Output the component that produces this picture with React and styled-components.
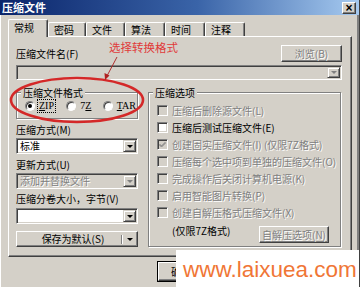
import styled, { createGlobalStyle } from 'styled-components';

const GlobalStyle = createGlobalStyle`
  html, body {
    margin: 0;
    padding: 0;
    background: #d4d0c8;
  }
  body {
    width: 360px;
    height: 287px;
    overflow: hidden;
    font-family: "Noto Sans CJK SC", "Liberation Sans", sans-serif;
    font-size: 10px;
    color: #000;
  }
`;

const tabs = [
  { label: '常规', width: 40 },
  { label: '密码', width: 38 },
  { label: '文件', width: 39 },
  { label: '算法', width: 40 },
  { label: '时间', width: 40 },
  { label: '注释', width: 40 },
];

const options = [
  { label: '压缩后删除源文件(L)', disabled: true },
  { label: '压缩后测试压缩文件(E)', disabled: false },
  { label: '创建固实压缩文件(I) (仅限7Z格式)', disabled: true, checked: true },
  { label: '压缩每个选中项到单独的压缩文件(O)', disabled: true },
  { label: '完成操作后关闭计算机电源(K)', disabled: true },
  { label: '启用智能图片转换(P)', disabled: true },
  { label: '创建自解压格式压缩文件(X)', disabled: true },
];

const App = () => {
  return (
    <>
      <GlobalStyle />
      <Window>
        <TitleBar>
          <Title>压缩文件</Title>
          <CloseButton>×</CloseButton>
        </TitleBar>

        <Body>
          <TabStrip>
            {tabs.map((tab, i) => (
              <Tab key={tab.label} $width={tab.width} $active={i === 0}>
                {tab.label}
              </Tab>
            ))}
          </TabStrip>

          <Panel>
            <TopRow>
              <FieldLabel>压缩文件名(F)</FieldLabel>
              <Button $width={61} disabled>浏览(B)</Button>
            </TopRow>
            <Combo $disabled>
              <ComboText />
              <ArrowBox $disabled />
            </Combo>

            <Columns>
              <LeftColumn>
                <GroupBox>
                  <GroupTitle>压缩文件格式</GroupTitle>
                  <RadioRow>
                    <RadioItem $width={42}>
                      <RadioCircle $checked />
                      <RadioText $focused><u>Z</u>IP</RadioText>
                    </RadioItem>
                    <RadioItem $width={37}>
                      <RadioCircle />
                      <RadioText>7<u>Z</u></RadioText>
                    </RadioItem>
                    <RadioItem>
                      <RadioCircle />
                      <RadioText><u>T</u>AR</RadioText>
                    </RadioItem>
                  </RadioRow>
                </GroupBox>

                <FieldLabel $top={4}>压缩方式(M)</FieldLabel>
                <Select $top={1}>
                  <ComboText>标准</ComboText>
                  <ArrowBox />
                </Select>

                <FieldLabel $top={4}>更新方式(U)</FieldLabel>
                <Select $top={1} $disabled>
                  <ComboText $disabled>添加并替换文件</ComboText>
                  <ArrowBox $disabled />
                </Select>

                <FieldLabel $top={3}>压缩分卷大小，字节(V)</FieldLabel>
                <Select $top={2}>
                  <ComboText />
                  <ArrowBox />
                </Select>

                <SplitButton>
                  <SplitMain>保存为默认(S)</SplitMain>
                  <SplitDivider />
                  <SplitArrow>
                    <Triangle />
                  </SplitArrow>
                </SplitButton>
              </LeftColumn>

              <RightColumn>
                <GroupTitle>压缩选项</GroupTitle>
                <OptionList>
                  {options.map((opt) => (
                    <CheckRow key={opt.label}>
                      <CheckBox $disabled={opt.disabled}>
                        {opt.checked && (
                          <svg width="9" height="9" viewBox="0 0 9 9">
                            <path
                              d="M1.5 4 L3.5 6 L7.5 2 M1.5 5 L3.5 7 L7.5 3"
                              fill="none"
                              stroke="#808080"
                              strokeWidth="1"
                            />
                          </svg>
                        )}
                      </CheckBox>
                      <CheckText $disabled={opt.disabled}>{opt.label}</CheckText>
                    </CheckRow>
                  ))}
                  <LastLine>
                    <NoteText>(仅限7Z格式)</NoteText>
                    <Button $width={70} $height={17} disabled>自解压选项(N)</Button>
                  </LastLine>
                </OptionList>
              </RightColumn>
            </Columns>
          </Panel>

          <BottomBar>
            <Button $width={46} $height={19} $default>确定</Button>
          </BottomBar>
        </Body>

        <Annotation>选择转换格式</Annotation>
        <Marks width="360" height="287" viewBox="0 0 360 287">
          <ellipse cx="77" cy="100" rx="66" ry="22" fill="none" stroke="#d42828" strokeWidth="2.6" />
          <line x1="117" y1="57" x2="107.5" y2="75" stroke="#b03030" strokeWidth="1" />
          <polygon points="105,80 104.5,73 109.5,75.5" fill="#b02020" />
        </Marks>

        <Watermark>www.laixuea.com</Watermark>
      </Window>
    </>
  );
};

const raised = `
  border: 1px solid;
  border-color: #fff #404040 #404040 #fff;
  box-shadow: inset -1px -1px 0 #808080;
`;

const sunken = `
  border: 1px solid;
  border-color: #808080 #fff #fff #808080;
  box-shadow: inset 1px 1px 0 #404040, inset -1px -1px 0 #d4d0c8;
`;

const Window = styled.div`
  position: relative;
  width: 360px;
  height: 287px;
  box-sizing: border-box;
  background: #d4d0c8;
  border-right: 1px solid #404040;
  box-shadow: inset -2px 0 0 #808080, inset 1px 0 0 #fff;
  display: flex;
  flex-direction: column;
  overflow: hidden;
`;

const TitleBar = styled.div`
  height: 15px;
  display: flex;
  align-items: center;
  justify-content: space-between;
  padding: 0 3px 0 2px;
  background: linear-gradient(to right, #0a246a 0%, #3a64a8 55%, #a6caf0 100%);
`;

const Title = styled.span`
  color: #fff;
  font-weight: bold;
  font-size: 11px;
  line-height: 15px;
`;

const CloseButton = styled.span`
  width: 12px;
  height: 10px;
  background: #d4d0c8;
  ${raised}
  font-family: "Liberation Sans", sans-serif;
  font-size: 12px;
  font-weight: bold;
  line-height: 10px;
  text-align: center;
`;

const Body = styled.div`
  padding: 4px 0 0 8px;
`;

const TabStrip = styled.div`
  display: flex;
  align-items: flex-end;
  height: 17px;
`;

const Tab = styled.div`
  position: relative;
  z-index: ${(p) => (p.$active ? 2 : 1)};
  width: ${(p) => p.$width}px;
  height: ${(p) => (p.$active ? 18 : 14)}px;
  margin-bottom: ${(p) => (p.$active ? -1 : 0)}px;
  box-sizing: border-box;
  padding-left: 5px;
  background: #d4d0c8;
  border-top: 1px solid #fff;
  border-left: 1px solid #fff;
  border-right: 1px solid #404040;
  border-radius: 2px 2px 0 0;
  box-shadow: inset -1px 0 0 #808080;
  font-size: 10px;
  line-height: ${(p) => (p.$active ? 15 : 13)}px;
`;

const Panel = styled.div`
  width: 344px;
  height: 221px;
  box-sizing: border-box;
  padding: 8px 9px 0 7px;
  border: 1px solid;
  border-color: #fff #404040 #404040 #fff;
  box-shadow: inset -1px -1px 0 #808080;
`;

const TopRow = styled.div`
  display: flex;
  align-items: center;
  justify-content: space-between;
  height: 17px;
`;

const FieldLabel = styled.div`
  margin-top: ${(p) => p.$top || 0}px;
  font-size: 10px;
  line-height: 14px;
  white-space: nowrap;
`;

const Button = styled.button`
  width: ${(p) => p.$width}px;
  height: ${(p) => p.$height || 17}px;
  box-sizing: border-box;
  padding: 0;
  background: #d4d0c8;
  font-family: inherit;
  font-size: 10px;
  line-height: 12px;
  color: #000;
  ${raised}
  outline: ${(p) => (p.$default ? '1px solid #000' : 'none')};
  outline-offset: 0;

  &:disabled {
    color: #808080;
    text-shadow: 1px 1px 0 #fff;
  }
`;

const Combo = styled.div`
  margin-top: 3px;
  height: 15px;
  box-sizing: border-box;
  display: flex;
  padding: 1px;
  background: ${(p) => (p.$disabled ? '#d4d0c8' : '#fff')};
  ${sunken}
`;

const Select = styled(Combo)`
  margin-top: ${(p) => p.$top}px;
  height: 16px;
`;

const ComboText = styled.div`
  flex: 1;
  padding-left: 2px;
  font-size: 10px;
  line-height: 12px;
  color: ${(p) => (p.$disabled ? '#808080' : '#000')};
  text-shadow: ${(p) => (p.$disabled ? '1px 1px 0 #fff' : 'none')};
  white-space: nowrap;
`;

const ArrowBox = styled.div`
  width: 13px;
  box-sizing: border-box;
  display: flex;
  align-items: center;
  justify-content: center;
  background: #d4d0c8;
  border: 1px solid;
  border-color: #d4d0c8 #404040 #404040 #d4d0c8;
  box-shadow: inset 1px 1px 0 #fff, inset -1px -1px 0 #808080;

  &::after {
    content: '';
    border-left: 3px solid transparent;
    border-right: 3px solid transparent;
    border-top: 3px solid ${(p) => (p.$disabled ? '#808080' : '#000')};
  }
`;

const Columns = styled.div`
  display: flex;
  gap: 10px;
  margin-top: 7px;
`;

const LeftColumn = styled.div`
  width: 122px;
  display: flex;
  flex-direction: column;
`;

const GroupBox = styled.fieldset`
  margin: 0;
  padding: 0;
  min-width: 0;
  border: 1px solid #808080;
  box-shadow: inset 1px 1px 0 #fff, 1px 1px 0 #fff;
`;

const RightColumn = styled(GroupBox)`
  width: 193px;
  box-sizing: border-box;
`;

const GroupTitle = styled.legend`
  margin-left: 4px;
  padding: 0 2px;
  background: #d4d0c8;
  font-size: 10px;
  line-height: 11px;
`;

const RadioRow = styled.div`
  display: flex;
  align-items: center;
  height: 12px;
  padding: 2px 0 6px 8px;
`;

const RadioItem = styled.div`
  display: flex;
  align-items: center;
  gap: 3px;
  width: ${(p) => (p.$width ? `${p.$width}px` : 'auto')};
`;

const RadioCircle = styled.span`
  position: relative;
  flex-shrink: 0;
  width: 10px;
  height: 10px;
  box-sizing: border-box;
  border-radius: 50%;
  background: #fff;
  border: 1px solid;
  border-color: #808080 #fff #fff #808080;
  box-shadow: inset 1px 1px 0 #404040;

  &::after {
    content: '';
    display: ${(p) => (p.$checked ? 'block' : 'none')};
    position: absolute;
    left: 2px;
    top: 2px;
    width: 4px;
    height: 4px;
    border-radius: 50%;
    background: #000;
  }
`;

const RadioText = styled.span`
  font-family: "Liberation Serif", serif;
  font-size: 10px;
  line-height: 12px;
  padding: 0 1px;
  outline: ${(p) => (p.$focused ? '1px dotted #000' : 'none')};
`;

const SplitButton = styled.div`
  margin-top: 7px;
  height: 16px;
  box-sizing: border-box;
  display: flex;
  align-items: center;
  ${raised}
`;

const SplitMain = styled.div`
  flex: 1;
  text-align: center;
  padding-left: 8px;
  font-size: 10px;
  line-height: 12px;
`;

const SplitDivider = styled.div`
  width: 1px;
  height: 9px;
  background: #808080;
  border-right: 1px solid #fff;
`;

const SplitArrow = styled.div`
  width: 14px;
  display: flex;
  justify-content: center;
`;

const Triangle = styled.span`
  border-left: 3px solid transparent;
  border-right: 3px solid transparent;
  border-top: 3px solid #000;
`;

const OptionList = styled.div`
  padding: 4px 11px 2px 8px;
`;

const CheckRow = styled.div`
  display: flex;
  align-items: center;
  gap: 4px;
  height: 17px;
`;

const CheckBox = styled.span`
  width: 11px;
  height: 11px;
  box-sizing: border-box;
  flex-shrink: 0;
  display: flex;
  align-items: center;
  justify-content: center;
  background: ${(p) => (p.$disabled ? '#d4d0c8' : '#fff')};
  ${sunken}
`;

const CheckText = styled.span`
  font-size: 10px;
  line-height: 12px;
  white-space: nowrap;
  color: ${(p) => (p.$disabled ? '#808080' : '#000')};
  text-shadow: ${(p) => (p.$disabled ? '1px 1px 0 #fff' : 'none')};
`;

const LastLine = styled.div`
  display: flex;
  align-items: flex-start;
  margin-top: 5px;
`;

const NoteText = styled.span`
  padding-left: 15px;
  margin-top: -2px;
  font-size: 10px;
  line-height: 14px;
  white-space: nowrap;
  flex: 1;
`;

const BottomBar = styled.div`
  display: flex;
  padding: 5px 0 0 150px;
`;

const Annotation = styled.div`
  position: absolute;
  left: 109px;
  top: 40px;
  color: #e03a3a;
  font-size: 11.5px;
  line-height: 14px;
  white-space: nowrap;
`;

const Marks = styled.svg`
  position: absolute;
  left: 0;
  top: 0;
  pointer-events: none;
`;

const Watermark = styled.div`
  position: absolute;
  left: 176px;
  top: 250px;
  right: 0;
  bottom: 0;
  box-sizing: border-box;
  padding: 2px 0 0 7px;
  background: #fff;
  color: #f07636;
  font-family: "Liberation Sans", sans-serif;
  font-size: 22.5px;
  line-height: 35px;
  white-space: nowrap;
`;

export default App;
